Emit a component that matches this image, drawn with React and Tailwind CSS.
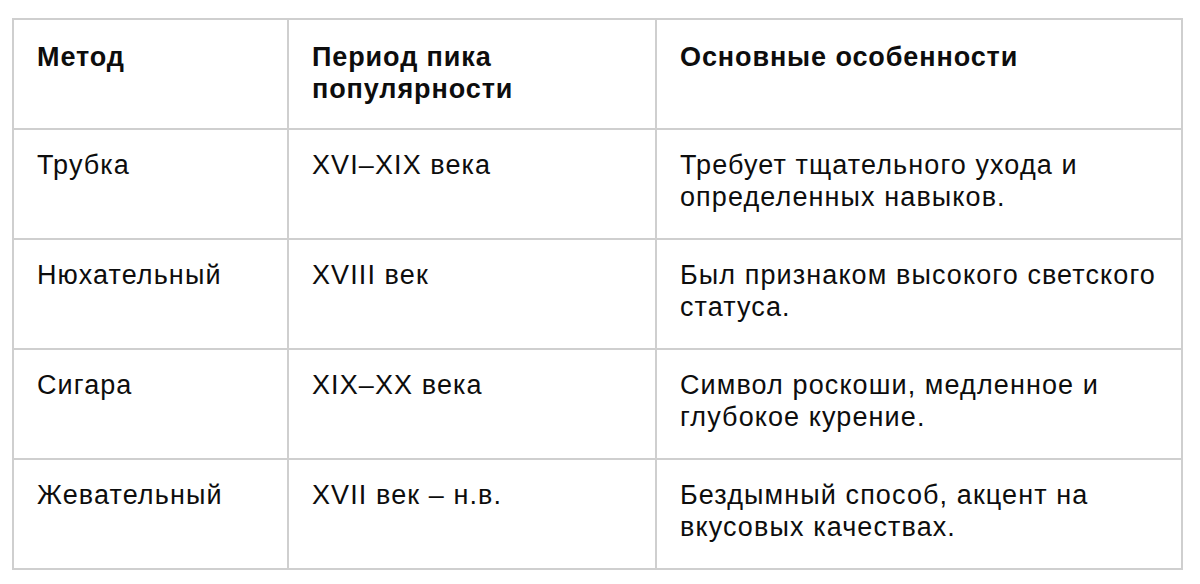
const rows = [
  ["Трубка", "XVI–XIX века", "Требует тщательного ухода и определенных навыков."],
  ["Нюхательный", "XVIII век", "Был признаком высокого светского статуса."],
  ["Сигара", "XIX–XX века", "Символ роскоши, медленное и глубокое курение."],
  ["Жевательный", "XVII век – н.в.", "Бездымный способ, акцент на вкусовых качествах."],
];

export default function App() {
  return (
    <div className="w-[1200px] h-[584px] bg-white pl-[12px] pt-[18px] font-['Liberation_Sans',Arial,sans-serif] text-[#0d0d0d]">
      <table className="table-fixed border-collapse w-[1171px] text-[27px] leading-[31.5px] tracking-[1.1px]">
        <colgroup>
          <col className="w-[275px]" />
          <col className="w-[368px]" />
          <col />
        </colgroup>
        <thead>
          <tr>
            {["Метод", "Период пика популярности", "Основные особенности"].map((h) => (
              <th
                key={h}
                className="border-2 border-[#cfcfcf] text-left align-top font-bold tracking-[0.9px] pl-[23px] pr-[20px] pt-[22px] pb-[23px]"
              >
                {h}
              </th>
            ))}
          </tr>
        </thead>
        <tbody>
          {rows.map((r) => (
            <tr key={r[0]}>
              {r.map((c, i) => (
                <td
                  key={i}
                  className="border-2 border-[#cfcfcf] align-top font-normal pl-[23px] pr-[20px] pt-[20px] pb-[25px]"
                >
                  {c}
                </td>
              ))}
            </tr>
          ))}
        </tbody>
      </table>
    </div>
  );
}
